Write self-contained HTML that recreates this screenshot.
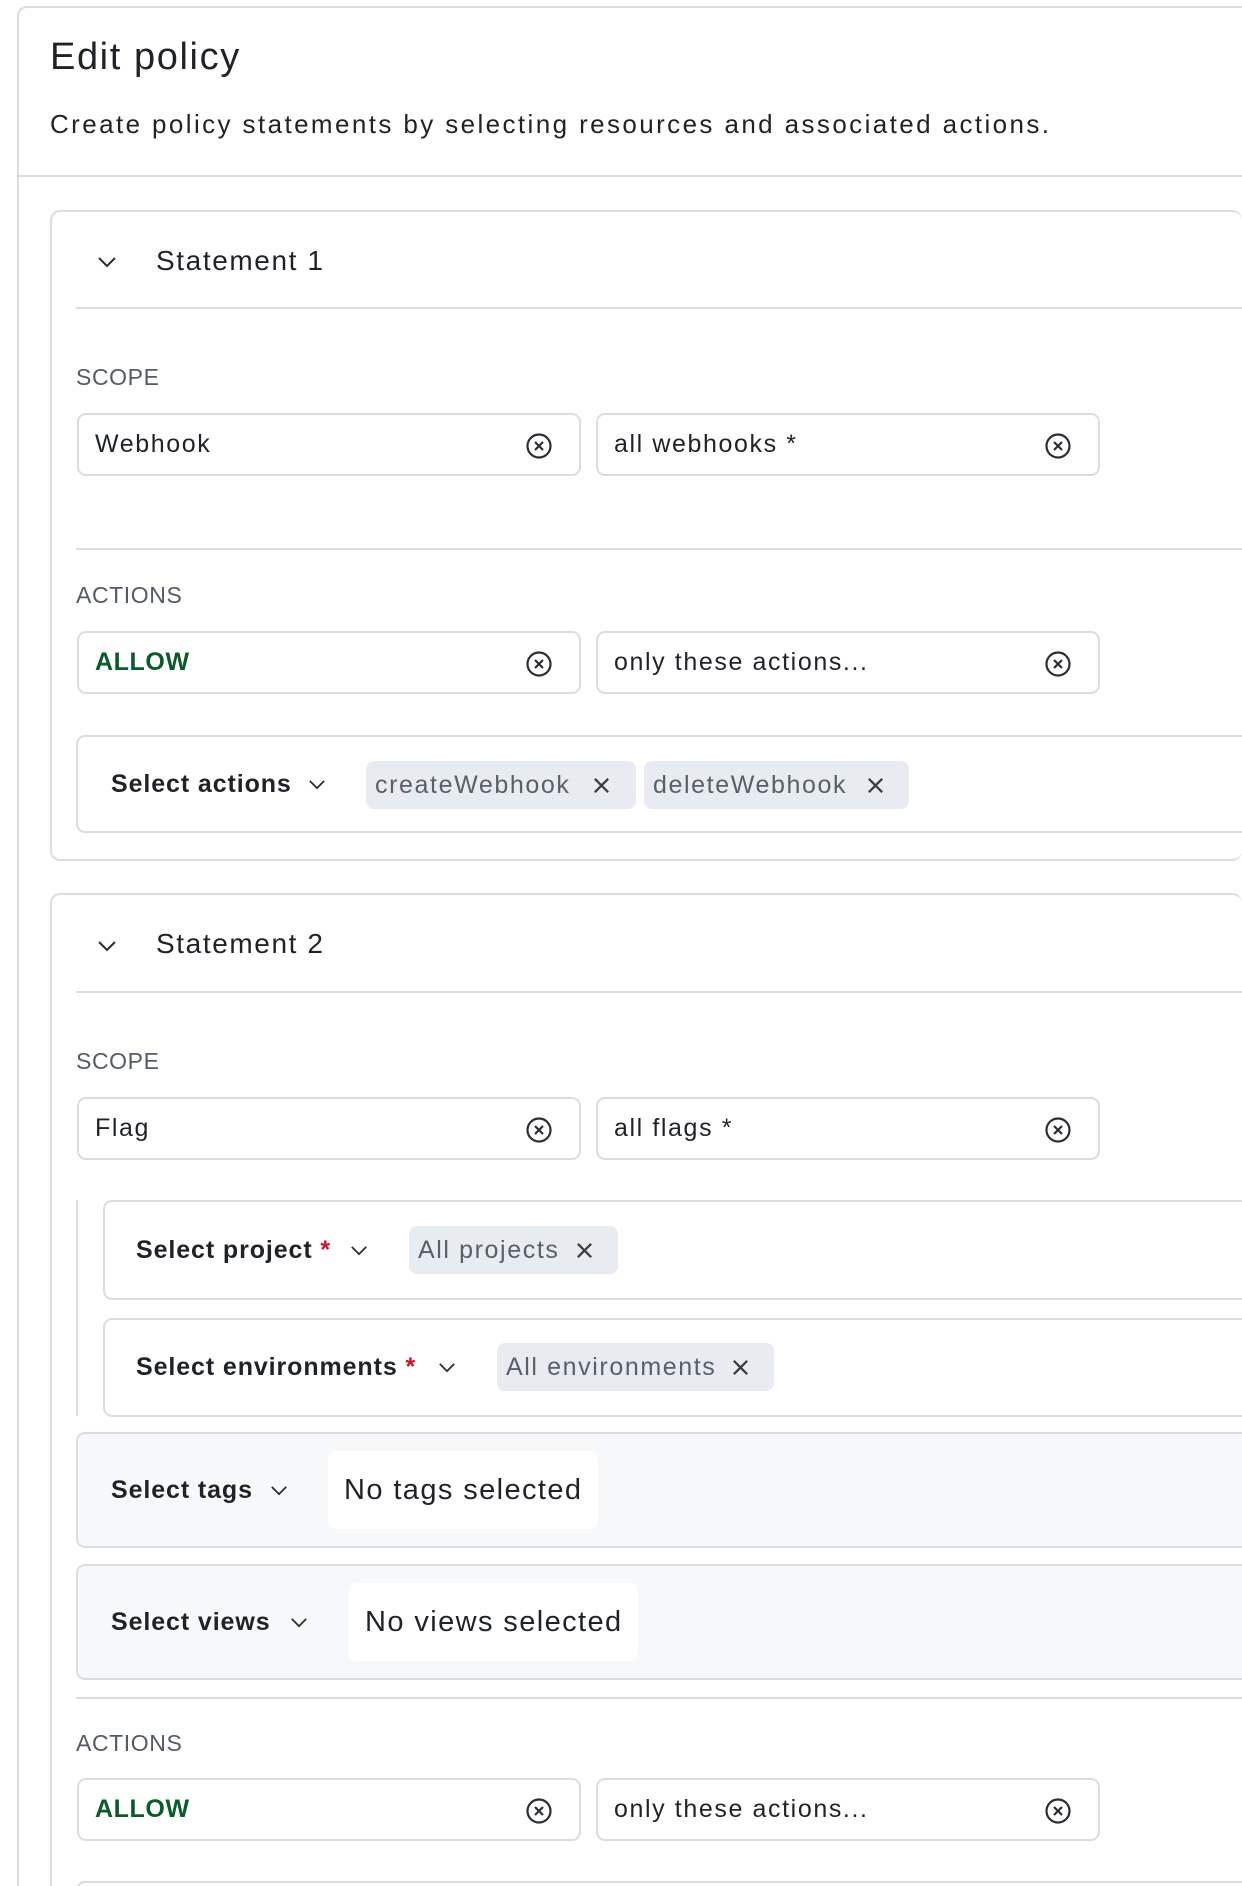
<!DOCTYPE html>
<html style="overflow:hidden"><head><style>
*{box-sizing:border-box;margin:0;padding:0}
html,body{width:1242px;height:1886px;overflow:hidden;background:#fff}
body{font-family:"Liberation Sans",sans-serif;color:#1f2328;letter-spacing:1.6px}
#w{position:relative;width:1242px;height:1886px;overflow:hidden}
.abs{position:absolute}
.card{position:absolute;border:2px solid #d9dde3;border-radius:10px;border-right:none}
.hr{position:absolute;height:2px;background:#d9dde3;right:0}
.lbl{position:absolute;font-size:23px;color:#545b66;left:76px;letter-spacing:0.6px}
.inp{position:absolute;height:63px;width:504px;border:2px solid #d9dde3;border-radius:9px;font-size:25px;padding-left:16px;line-height:59px}
.inp svg{position:absolute;right:26px;top:17px}
.box{position:absolute;left:76px;right:-10px;border:2px solid #d9dde3;border-radius:9px}
.sel{position:absolute;font-size:25px;font-weight:bold;color:#1f2328;letter-spacing:0.9px}
.chip{position:absolute;background:#e8ebef;border-radius:8px;height:48px;line-height:48px;font-size:25px;color:#59606b;padding-left:9px}
.red{color:#c8102e}
.white{position:absolute;background:#fff;border-radius:8px;font-size:29px;line-height:78px;padding-left:16px;letter-spacing:1.4px}
</style></head><body><div id="w">
<svg width="0" height="0" style="position:absolute"><defs>
<symbol id="cx" viewBox="0 0 28 28"><circle cx="14" cy="14" r="11.5" fill="none" stroke="#2a2e33" stroke-width="2.2"/><path d="M10 10L18 18M18 10L10 18" stroke="#2a2e33" stroke-width="2.2"/></symbol>
<symbol id="dn" viewBox="0 0 20 12"><path d="M2 2L10 10L18 2" fill="none" stroke="#2a2e33" stroke-width="2"/></symbol>
<symbol id="x" viewBox="0 0 20 20"><path d="M3 3L17 17M17 3L3 17" stroke="#3a3f46" stroke-width="2.4"/></symbol>
</defs></svg>

<div class="abs" style="left:17px;top:6px;right:-10px;bottom:-20px;border:2px solid #d9dde3;border-radius:10px"></div>
<div class="abs" style="left:50px;top:36px;font-size:38px">Edit policy</div>
<div class="abs" style="left:50px;top:109px;font-size:26px;letter-spacing:2.4px">Create policy statements by selecting resources and associated actions.</div>
<div class="hr" style="left:17px;top:175px"></div>

<!-- Statement 1 -->
<div class="card" style="left:50px;top:210px;right:0;height:651px"></div>
<svg class="abs" style="left:97px;top:256px" width="20" height="12"><use href="#dn"/></svg>
<div class="abs" style="left:156px;top:245px;font-size:28px">Statement 1</div>
<div class="hr" style="left:76px;top:307px"></div>
<div class="lbl" style="top:364px">SCOPE</div>
<div class="inp" style="left:77px;top:413px">Webhook<svg width="28" height="28"><use href="#cx"/></svg></div>
<div class="inp" style="left:596px;top:413px">all webhooks *<svg width="28" height="28"><use href="#cx"/></svg></div>
<div class="hr" style="left:76px;top:548px"></div>
<div class="lbl" style="top:582px">ACTIONS</div>
<div class="inp" style="left:77px;top:631px;color:#0b5a2a;font-weight:bold;letter-spacing:0.6px">ALLOW<svg width="28" height="28"><use href="#cx"/></svg></div>
<div class="inp" style="left:596px;top:631px">only these actions...<svg width="28" height="28"><use href="#cx"/></svg></div>
<div class="box" style="top:735px;height:98px"></div>
<div class="sel" style="left:111px;top:770px">Select actions</div>
<svg class="abs" style="left:308px;top:779px" width="18" height="11"><use href="#dn"/></svg>
<div class="chip" style="left:366px;top:761px;width:270px">createWebhook<svg class="abs" style="left:226px;top:15px" width="19" height="19"><use href="#x"/></svg></div>
<div class="chip" style="left:644px;top:761px;width:265px">deleteWebhook<svg class="abs" style="left:222px;top:15px" width="19" height="19"><use href="#x"/></svg></div>

<!-- Statement 2 -->
<div class="card" style="left:50px;top:893px;right:0;bottom:-20px"></div>
<svg class="abs" style="left:97px;top:940px" width="20" height="12"><use href="#dn"/></svg>
<div class="abs" style="left:156px;top:928px;font-size:28px">Statement 2</div>
<div class="hr" style="left:76px;top:991px"></div>
<div class="lbl" style="top:1048px">SCOPE</div>
<div class="inp" style="left:77px;top:1097px">Flag<svg width="28" height="28"><use href="#cx"/></svg></div>
<div class="inp" style="left:596px;top:1097px">all flags *<svg width="28" height="28"><use href="#cx"/></svg></div>
<div class="abs" style="left:76px;top:1200px;width:2px;height:216px;background:#d9dde3"></div>
<div class="box" style="left:103px;top:1200px;height:100px"></div>
<div class="sel" style="left:136px;top:1236px">Select project <span class="red">*</span></div>
<svg class="abs" style="left:350px;top:1245px" width="18" height="11"><use href="#dn"/></svg>
<div class="chip" style="left:409px;top:1226px;width:209px">All projects<svg class="abs" style="left:166px;top:15px" width="19" height="19"><use href="#x"/></svg></div>
<div class="box" style="left:103px;top:1318px;height:99px"></div>
<div class="sel" style="left:136px;top:1353px">Select environments <span class="red">*</span></div>
<svg class="abs" style="left:438px;top:1362px" width="18" height="11"><use href="#dn"/></svg>
<div class="chip" style="left:497px;top:1343px;width:277px">All environments<svg class="abs" style="left:234px;top:15px" width="19" height="19"><use href="#x"/></svg></div>
<div class="box" style="top:1432px;height:116px;background:#f7f8fa"></div>
<div class="sel" style="left:111px;top:1476px">Select tags</div>
<svg class="abs" style="left:270px;top:1485px" width="18" height="11"><use href="#dn"/></svg>
<div class="white" style="left:328px;top:1451px;width:270px;height:78px">No tags selected</div>
<div class="box" style="top:1564px;height:116px;background:#f7f8fa"></div>
<div class="sel" style="left:111px;top:1608px">Select views</div>
<svg class="abs" style="left:290px;top:1617px" width="18" height="11"><use href="#dn"/></svg>
<div class="white" style="left:349px;top:1583px;width:289px;height:78px">No views selected</div>
<div class="hr" style="left:76px;top:1697px"></div>
<div class="lbl" style="top:1730px">ACTIONS</div>
<div class="inp" style="left:77px;top:1778px;color:#0b5a2a;font-weight:bold;letter-spacing:0.6px">ALLOW<svg width="28" height="28"><use href="#cx"/></svg></div>
<div class="inp" style="left:596px;top:1778px">only these actions...<svg width="28" height="28"><use href="#cx"/></svg></div>
<div class="box" style="top:1881px;bottom:-30px"></div>
</div></body></html>
